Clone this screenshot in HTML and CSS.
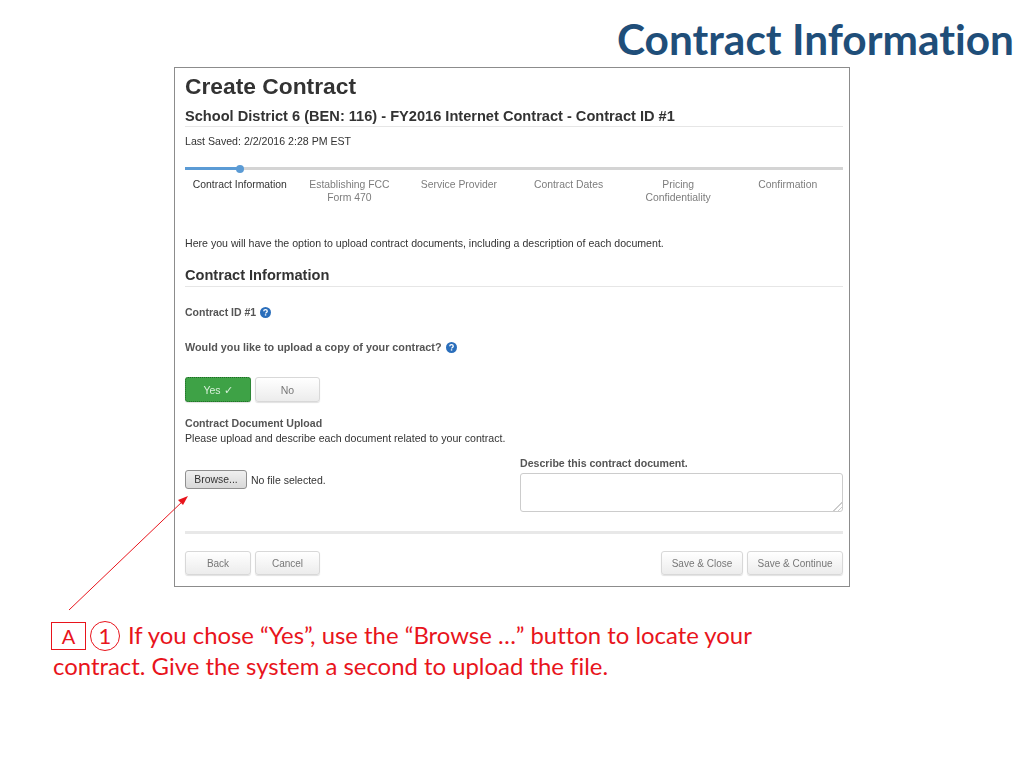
FILE: index.html
```html
<!DOCTYPE html>
<html lang="en">
<head>
<meta charset="utf-8">
<title>Contract Information</title>
<link rel="stylesheet" href="styles.css">
</head>
<body>
<main class="slide">
  <h1 class="slide-title">Contract Information</h1>

  <section class="shot">
    <h2 class="page-title">Create Contract</h2>
    <h3 class="page-sub">School District 6 (BEN: 116) - FY2016 Internet Contract - Contract ID #1</h3>
    <p class="saved">Last Saved: 2/2/2016 2:28 PM EST</p>

    <div class="progress"><div class="progress-fill"></div><div class="progress-dot"></div></div>
    <ol class="steps">
      <li class="step step-active">Contract Information</li>
      <li class="step">Establishing FCC<br>Form 470</li>
      <li class="step">Service Provider</li>
      <li class="step">Contract Dates</li>
      <li class="step">Pricing<br>Confidentiality</li>
      <li class="step">Confirmation</li>
    </ol>

    <p class="intro">Here you will have the option to upload contract documents, including a description of each document.</p>
    <h3 class="section-title">Contract Information</h3>

    <p class="field-id">Contract ID #1 <svg class="help" viewBox="0 0 10 10"><circle cx="5" cy="5" r="5" fill="#2a6ebb"/><path d="M3.4 3.9C3.4 2.9 4.1 2.4 5 2.4s1.6.5 1.6 1.4c0 1.2-1.5 1.1-1.5 2.2" fill="none" stroke="#fff" stroke-width="1.2"/><rect x="4.4" y="6.6" width="1.3" height="1.2" fill="#fff"/></svg></p>
    <p class="question">Would you like to upload a copy of your contract? <svg class="help" viewBox="0 0 10 10"><circle cx="5" cy="5" r="5" fill="#2a6ebb"/><path d="M3.4 3.9C3.4 2.9 4.1 2.4 5 2.4s1.6.5 1.6 1.4c0 1.2-1.5 1.1-1.5 2.2" fill="none" stroke="#fff" stroke-width="1.2"/><rect x="4.4" y="6.6" width="1.3" height="1.2" fill="#fff"/></svg></p>

    <div class="choice">
      <button class="btn btn-yes">Yes ✓</button>
      <button class="btn btn-no">No</button>
    </div>

    <p class="upload-title">Contract Document Upload</p>
    <p class="upload-help">Please upload and describe each document related to your contract.</p>

    <div class="upload-row">
      <div class="file">
        <button class="browse">Browse...</button>
        <span class="file-name">No file selected.</span>
      </div>
      <div class="describe">
        <label class="describe-label">Describe this contract document.</label>
        <textarea class="describe-box"></textarea>
      </div>
    </div>

    <hr class="rule">

    <div class="actions">
      <div class="action-group">
        <button class="btn btn-back">Back</button>
        <button class="btn btn-cancel">Cancel</button>
      </div>
      <div class="action-group">
        <button class="btn btn-close">Save &amp; Close</button>
        <button class="btn btn-continue">Save &amp; Continue</button>
      </div>
    </div>
  </section>

  <svg class="arrow" viewBox="0 0 1024 768">
    <line x1="69" y1="610" x2="184" y2="500" stroke="#e8141c" stroke-width="1"/>
    <polygon points="188,496 178,500 183,505" fill="#e8141c"/>
  </svg>

  <p class="callout"><span class="badge">A</span><span class="circle">1</span>If you chose “Yes”, use the “Browse …” button to locate your<br>contract. Give the system a second to upload the file.</p>
</main>
</body>
</html>
```

FILE: styles.css
```css
* { box-sizing: border-box; }
html, body { margin: 0; padding: 0; }
body { background: #fff; width: 1024px; height: 768px; overflow: hidden; font-family: "Liberation Sans", Arial, sans-serif; }
.slide { position: relative; width: 1024px; height: 768px; }

.slide-title {
  position: absolute; left: 617px; top: 15px; margin: 0;
  font: 700 42.4px/48px Lato, sans-serif; font-variant-ligatures: none; color: #1f4e79; white-space: nowrap;
}

.shot {
  position: absolute; left: 174px; top: 67px; width: 676px; height: 520px;
  border: 1px solid #8c8c8c; padding: 0 6px 0 10px; color: #333; background: #fff;
  filter: blur(0.3px);
}
.page-title { margin: 4px 0 0; font-size: 22.8px; line-height: 28px; font-weight: 700; color: #333; }
.page-sub { margin: 7px 0 0; padding-bottom: 1px; font-size: 14.6px; line-height: 18px; font-weight: 700; border-bottom: 1px solid #e6e6e6; }
.saved { margin: 7px 0 0; font-size: 10.6px; line-height: 14px; color: #333; }

.progress { position: relative; margin-top: 19px; height: 3px; background: #d4d4d4; }
.progress-fill { width: 55px; height: 3px; background: #5b9bd5; }
.progress-dot { position: absolute; left: 51px; top: -2.5px; width: 8px; height: 8px; border-radius: 50%; background: #5b9bd5; }

.steps { list-style: none; margin: 8px 0 0; padding: 0; display: grid; grid-template-columns: repeat(6, 109.6px); height: 50px; }
.step { text-align: center; font-size: 10.4px; line-height: 13px; color: #7d7d7d; }
.step-active { color: #333; }

.intro { margin: 8px 0 0; font-size: 10.6px; line-height: 14px; }
.section-title { margin: 16px 0 0; padding-bottom: 2px; font-size: 14.6px; line-height: 18px; font-weight: 700; border-bottom: 1px solid #e6e6e6; }
.field-id { margin: 18px 0 0; font-size: 10.5px; line-height: 14px; font-weight: 700; color: #555; display: flex; align-items: center; gap: 4px; }
.question { margin: 21px 0 0; font-size: 10.8px; line-height: 14px; font-weight: 700; color: #555; display: flex; align-items: center; gap: 4px; }
.help { width: 11px; height: 11px; flex: none; }

.choice { display: flex; gap: 4px; margin-top: 23px; }
.btn {
  height: 24px; padding: 0; border: 1px solid #d8d8d8; border-radius: 3px;
  background: linear-gradient(#fff, #ececec); color: #777; font: 10px "Liberation Sans", Arial, sans-serif;
  box-shadow: 0 1px 1px rgba(0,0,0,.12);
}
.btn-yes { width: 66px; height: 25px; background: #3ea246; color: #d8f0da; border: 1px dotted #1d6a24; font-size: 10.5px; }
.btn-no { width: 65px; height: 25px; font-size: 10.5px; }
.btn-back { width: 66px; }
.btn-cancel { width: 65px; }
.btn-close { width: 82px; }
.btn-continue { width: 96px; }

.upload-title { margin: 14px 0 0; font-size: 10.6px; line-height: 14px; font-weight: 700; color: #555; }
.upload-help { margin: 1px 0 0; font-size: 10.6px; line-height: 14px; }

.upload-row { display: flex; justify-content: space-between; margin-top: 11px; height: 63px; }
.file { display: flex; align-items: flex-start; gap: 4px; margin-top: 14px; }
.browse { width: 62px; height: 19px; padding: 0; border: 1px solid #8f8f8f; border-radius: 3px; background: linear-gradient(#f0f0f0, #d8d8d8); font: 10.4px "Liberation Sans", Arial, sans-serif; color: #333; }
.file-name { font-size: 10.5px; line-height: 20px; color: #333; }
.describe { width: 323px; }
.describe-label { display: block; font-size: 10.6px; line-height: 14px; font-weight: 700; color: #555; }
.describe-box { display: block; width: 323px; height: 39px; margin-top: 3px; border: 1px solid #ccc; border-radius: 3px; background: #fff; }
.describe-box::-webkit-resizer { background: linear-gradient(135deg, transparent 0 70%, #ccc 70% 74%, transparent 74% 85%, #ccc 85% 89%, transparent 89%); }

.rule { margin: 12px 0 0; height: 3px; border: 0; background: #e8e8e8; }
.actions { display: flex; justify-content: space-between; margin-top: 17px; }
.action-group { display: flex; gap: 4px; }

.arrow { position: absolute; left: 0; top: 0; width: 1024px; height: 768px; pointer-events: none; }

.callout {
  position: absolute; left: 53px; top: 619px; margin: 0; width: 760px;
  font: 400 23.9px/31px Lato, sans-serif; font-variant-ligatures: none; color: #e8141c;
}
.badge {
  display: inline-block; width: 35px; height: 28px; margin: -6px 4px -6px -2px;
  border: 1px solid #e8141c; text-align: center; font-size: 20px; line-height: 27px; vertical-align: 0;
}
.circle {
  display: inline-block; width: 30px; height: 30px; margin: -6px 8px -6px 0;
  border: 1.5px solid #e8141c; border-radius: 50%; text-align: center; font-size: 22px; line-height: 27px; vertical-align: 0;
}
```
